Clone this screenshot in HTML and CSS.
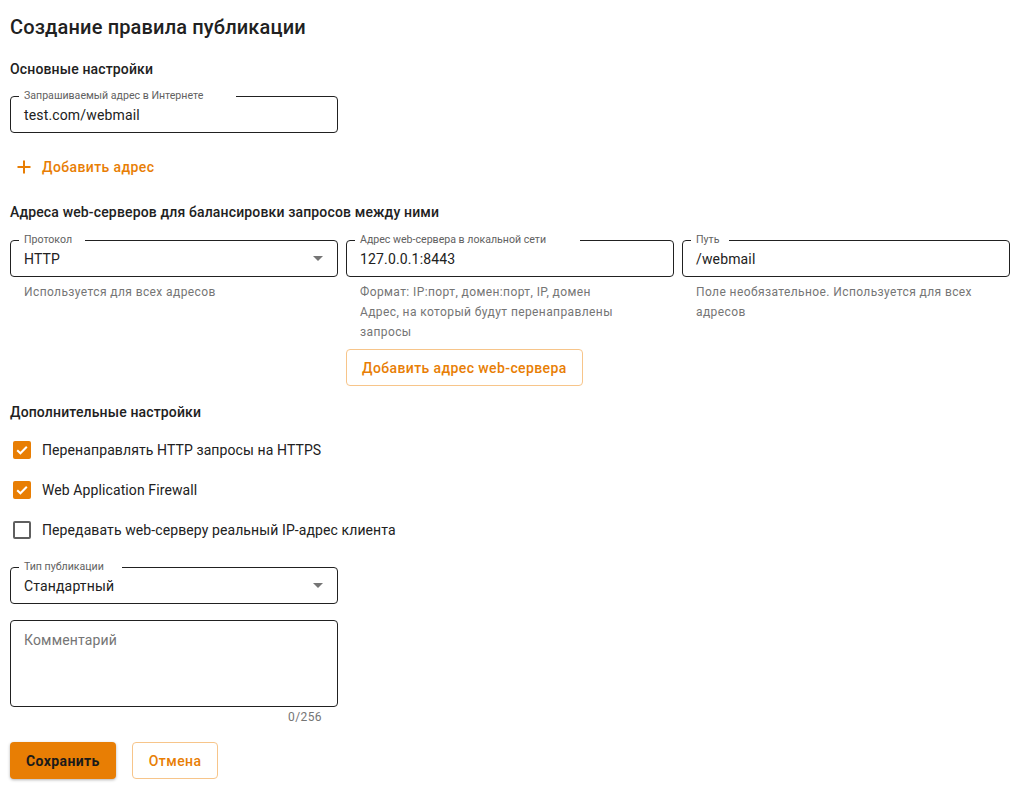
FILE: index.html
```html
<!DOCTYPE html>
<html lang="ru">
<head>
<meta charset="utf-8">
<title>Создание правила публикации</title>
<link rel="stylesheet" href="styles.css">
</head>
<body>
<div class="page">
  <h1 class="title">Создание правила публикации</h1>

  <h2 class="section">Основные настройки</h2>
  <div class="field field-first">
    <span class="flabel" data-label="Запрашиваемый адрес в Интернете">Запрашиваемый адрес в Интернете</span>
    <span class="value">test.com/webmail</span>
  </div>

  <button class="text-btn" type="button">
    <svg class="plus" width="14" height="14" viewBox="0 0 14 14"><path d="M7 0.5v13M0.5 7h13" stroke="#e87e04" stroke-width="2" fill="none"/></svg>
    <span>Добавить адрес</span>
  </button>

  <h2 class="section section-2">Адреса web-серверов для балансировки запросов между ними</h2>
  <div class="row3">
    <div class="col">
      <div class="field">
        <span class="flabel" data-label="Протокол">Протокол</span>
        <span class="value">HTTP</span>
        <svg class="caret" width="10" height="5" viewBox="0 0 10 5"><path d="M0 0h10L5 5z" fill="#757575"/></svg>
      </div>
      <div class="helper">Используется для всех адресов</div>
    </div>
    <div class="col">
      <div class="field">
        <span class="flabel" data-label="Адрес web-сервера в локальной сети">Адрес web-сервера в локальной сети</span>
        <span class="value">127.0.0.1:8443</span>
      </div>
      <div class="helper">Формат: IP:порт, домен:порт, IP, домен<br>Адрес, на который будут перенаправлены запросы</div>
      <button class="outline-btn add-server" type="button">Добавить адрес web-сервера</button>
    </div>
    <div class="col">
      <div class="field">
        <span class="flabel" data-label="Путь">Путь</span>
        <span class="value">/webmail</span>
      </div>
      <div class="helper">Поле необязательное. Используется для всех адресов</div>
    </div>
  </div>

  <h2 class="section section-3">Дополнительные настройки</h2>
  <div class="checks">
    <label class="check">
      <span class="box checked"><svg width="18" height="18" viewBox="0 0 18 18"><path d="M4.2 9.2l3.2 3.1 6.4-6.6" stroke="#fff" stroke-width="2" fill="none"/></svg></span>
      <span>Перенаправлять HTTP запросы на HTTPS</span>
    </label>
    <label class="check">
      <span class="box checked"><svg width="18" height="18" viewBox="0 0 18 18"><path d="M4.2 9.2l3.2 3.1 6.4-6.6" stroke="#fff" stroke-width="2" fill="none"/></svg></span>
      <span>Web Application Firewall</span>
    </label>
    <label class="check">
      <span class="box"></span>
      <span>Передавать web-серверу реальный IP-адрес клиента</span>
    </label>
  </div>

  <div class="field field-type">
    <span class="flabel" data-label="Тип публикации">Тип публикации</span>
    <span class="value">Стандартный</span>
    <svg class="caret" width="10" height="5" viewBox="0 0 10 5"><path d="M0 0h10L5 5z" fill="#757575"/></svg>
  </div>

  <div class="textarea">
    <span class="placeholder">Комментарий</span>
  </div>
  <div class="counter">0/256</div>

  <div class="actions">
    <button class="primary-btn" type="button">Сохранить</button>
    <button class="outline-btn cancel" type="button">Отмена</button>
  </div>
</div>
</body>
</html>
```

FILE: styles.css
```css
html, body {
  margin: 0;
  background: #fff;
}
.page {
  padding: 15px 10px;
  font-family: Roboto, "Noto Sans", sans-serif;
  color: #212121;
}
.title {
  margin: 0;
  font-size: 20px;
  line-height: 24px;
  font-weight: 500;
  letter-spacing: 0.15px;
}
.section {
  margin: 20px 0 0;
  font-size: 14px;
  line-height: 20px;
  font-weight: 500;
  letter-spacing: 0.15px;
}
.section-2 { margin-top: 17px; }
.section-3 { margin-top: 16px; }

.field {
  position: relative;
  box-sizing: border-box;
  width: 328px;
  height: 37px;
  border: 1px solid #212121;
  border-radius: 4px;
  display: flex;
  align-items: center;
  padding: 0 13px;
}
.field-first { margin-top: 17px; }
.value {
  font-size: 14px;
  letter-spacing: 0.15px;
  color: #212121;
}
.flabel {
  position: absolute;
  left: 13px;
  top: -8px;
  font-size: 10.6px;
  line-height: 13px;
  color: #616161;
  z-index: 1;
  white-space: nowrap;
}
.flabel::before {
  content: attr(data-label);
  position: absolute;
  left: -5px;
  top: 0;
  z-index: -1;
  padding: 0 6px 0 5px;
  font-size: 12.2px;
  color: transparent;
  background: #fff;
  white-space: nowrap;
}
.caret {
  position: absolute;
  right: 14px;
  top: 15px;
}

.text-btn {
  margin-top: 16px;
  height: 36px;
  display: flex;
  align-items: center;
  gap: 11px;
  padding: 0 8px 0 7px;
  border: 0;
  background: none;
  font-family: inherit;
  font-size: 14px;
  font-weight: 500;
  letter-spacing: 0.4px;
  color: #e87e04;
  cursor: pointer;
}

.row3 {
  margin-top: 18px;
  display: grid;
  grid-template-columns: 328px 328px 328px;
  gap: 8px;
}
.col {
  display: flex;
  flex-direction: column;
  align-items: flex-start;
}
.col .field { width: 100%; }
.helper {
  margin-top: 5px;
  padding: 0 14px;
  font-size: 12px;
  line-height: 20px;
  letter-spacing: 0.4px;
  color: #757575;
}

.outline-btn {
  box-sizing: border-box;
  height: 37px;
  padding: 0 15px;
  border: 1px solid #f7c58a;
  border-radius: 4px;
  background: #fff;
  font-family: inherit;
  font-size: 14px;
  font-weight: 500;
  letter-spacing: 0.4px;
  color: #e87e04;
  cursor: pointer;
}
.add-server { margin-top: 7px; }

.checks {
  margin-top: 8px;
  display: flex;
  flex-direction: column;
}
.check {
  height: 40px;
  display: flex;
  align-items: center;
  gap: 11px;
  padding-left: 3px;
  font-size: 14px;
  letter-spacing: 0.1px;
  color: #212121;
}
.box {
  box-sizing: border-box;
  width: 18px;
  height: 18px;
  border: 2px solid #5f5f5f;
  border-radius: 2px;
  display: flex;
  align-items: center;
  justify-content: center;
}
.box.checked {
  border: 0;
  background: #e87e04;
}

.field-type { margin-top: 17px; }

.textarea {
  box-sizing: border-box;
  margin-top: 16px;
  width: 328px;
  height: 87px;
  border: 1px solid #212121;
  border-radius: 4px;
  padding: 9px 13px;
}
.placeholder {
  font-size: 14px;
  line-height: 18px;
  letter-spacing: 0.15px;
  color: #757575;
}
.counter {
  width: 328px;
  box-sizing: border-box;
  padding-right: 16px;
  text-align: right;
  font-size: 12px;
  line-height: 20px;
  letter-spacing: 0.4px;
  color: #757575;
}

.actions {
  margin-top: 15px;
  display: flex;
  gap: 16px;
}
.primary-btn {
  height: 37px;
  padding: 0 16px;
  border: 0;
  border-radius: 4px;
  background: #e87e04;
  box-shadow: 0 1px 3px rgba(0,0,0,0.3);
  font-family: inherit;
  font-size: 14px;
  font-weight: 700;
  letter-spacing: 0.4px;
  color: #1a1a1a;
  cursor: pointer;
}
.cancel { padding: 0 16px; }
```
